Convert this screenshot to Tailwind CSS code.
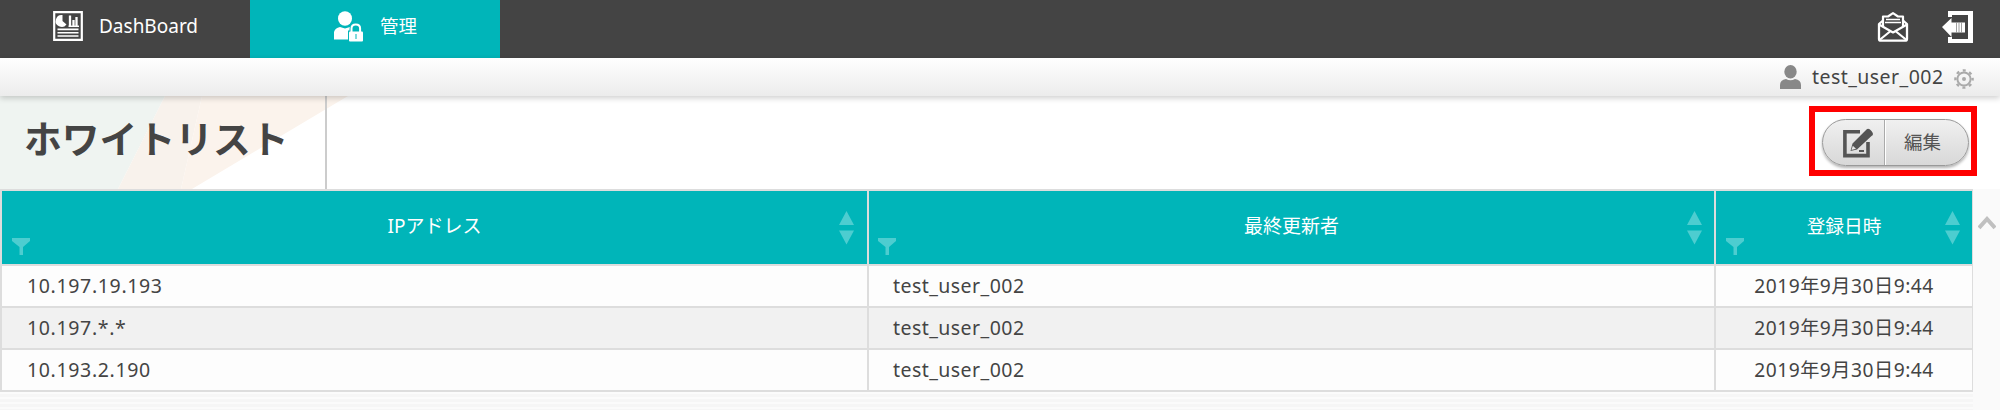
<!DOCTYPE html>
<html lang="ja">
<head>
<meta charset="utf-8">
<title>ホワイトリスト</title>
<script src="https://cdn.jsdelivr.net/npm/@tailwindcss/browser@4"></script>
</head>
<body class="w-[2000px] h-[410px] overflow-hidden bg-white text-[#444] font-['Noto_Sans','Noto_Sans_CJK_JP',sans-serif] text-[19.500px]">
<svg class="hidden">
  <symbol id="sort" viewBox="0 0 15 34"><path d="M7.5 0 15 14H0zM0 19.500h15L7.500 33.500z" fill="#4dcdd0"/></symbol>
  <symbol id="filter" viewBox="0 0 18 17"><path d="M0 0h18v3l-7 6v8H7.500V9L0 3z" fill="#4dcdd0"/></symbol>
</svg>

<nav class="flex h-[58px] bg-[#444] text-white">
  <a class="flex w-[250px] h-[52px] items-center pl-[53px] text-[19px]">
    <svg class="w-[30px] h-[30px] mr-[16px]" viewBox="0 0 30 30" fill="none">
      <path d="M1.200 1.200h27.600v27.600H1.200z" stroke="#fff" stroke-width="2.200"/>
      <path d="M9.500 4v6l4 3.500A6 6 0 1 1 9.500 4z" fill="#fff"/>
      <path d="M17 4.500V15M20.500 9v6M23.500 6v9" stroke="#fff" stroke-width="2.300"/>
      <path d="M15.500 15.300H26" stroke="#fff" stroke-width="1.500"/>
      <path d="M4.500 18.400h21M4.500 21.700h21M4.500 25h21" stroke="#fff" stroke-width="1.600"/>
    </svg>
    <span>DashBoard</span>
  </a>
  <a class="flex w-[250px] h-[58px] items-center pb-[6px] pl-[84px] bg-[#00b5b9] text-[18.500px]">
    <svg class="w-[30px] h-[31px] mr-[16px]" viewBox="0 0 30 31">
      <ellipse cx="11" cy="7.500" rx="7" ry="7.300" fill="#fff"/>
      <path d="M0 28.500V21q1-4 6-5l5 1.500 5-1.500 4 2v10.500z" fill="#fff"/>
      <path d="M14 19.500h15.500V31H14z" fill="#00b5b9"/>
      <path d="M17.500 21v-3q0-4 4.500-4t4.500 4v3" fill="#00b5b9" stroke="#00b5b9" stroke-width="4"/>
      <path d="M17.500 21.500v-4q0-4 4.300-4t4.300 4v4" fill="none" stroke="#fff" stroke-width="2"/>
      <rect x="15" y="20.500" width="14" height="10" rx="1" fill="#fff"/>
      <path d="M21 23h2v5h-2z" fill="#7fdadc"/>
    </svg>
    <span>管理</span>
  </a>
  <div class="flex flex-1 h-[54px] items-center justify-end pr-[27px] gap-[33px]">
    <svg class="w-[32px] h-[30px]" viewBox="0 0 32 30" fill="none" stroke="#fff" stroke-linejoin="round">
      <path d="M6 8.500 2 12v15q0 1.700 2 1.700h24q2 0 2-1.700V12l-4-3.500" stroke-width="2.300"/>
      <path d="M6 15V4.500h5L16 1.200l5 3.300h5V15" stroke-width="2.200"/>
      <path d="M9 7.500h14M8 10.500h16" stroke-width="1.400"/>
      <path d="m2 12.500 14 8 14-8M2.500 28 13 19.500M29.500 28 19 19.500" stroke-width="2.200"/>
    </svg>
    <svg class="w-[31px] h-[32px]" viewBox="0 0 31 32" fill="#fff">
      <path d="M6 0h25v32H6v-6h4v2h16V4H10v2H6z"/>
      <path d="M0 16 9.500 7v4.500H23v10H9.500V26z"/>
      <path d="M14.500 11.500v10M17 11.500v10M19.500 11.500v10" stroke="#888" stroke-width=".8"/>
    </svg>
  </div>
</nav>

<div class="relative z-10 flex h-[38px] items-center justify-end pr-[26px] bg-linear-to-b from-white to-[#ececec] shadow-[0_2px_6px_rgba(0,0,0,0.2)]">
  <svg class="w-[21px] h-[24px] mr-[11px]" viewBox="0 0 21 24" fill="#888"><ellipse cx="10.500" cy="6.800" rx="6.200" ry="6.800"/><path d="M0 24v-4q0-5 6-6 4.500 2.500 9 0 6 1 6 6v4z"/></svg>
  <span class="w-[131px] whitespace-nowrap tracking-[0.450px]">test_user_002</span>
  <svg class="w-[20px] h-[20px] ml-[11px] mt-[3px]" viewBox="0 0 20 20" fill="none" stroke="#aaa">
    <circle cx="10" cy="10" r="6.600" stroke-width="2"/>
    <circle cx="10" cy="10" r="8.600" stroke-width="2.400" stroke-dasharray="3 3.754" stroke-dashoffset="1.500"/>
    <circle cx="10" cy="10" r="2" fill="#aaa" stroke="none"/>
  </svg>
</div>

<header class="relative flex h-[93px] justify-between bg-white">
  <svg class="absolute left-0 top-0 w-[352px] h-[93px]" viewBox="0 0 352 93">
    <path d="M0 0h165l-47 93H0z" fill="#eff4f1"/>
    <path d="M165 0h37l-21 93h-63z" fill="#f8f2ec"/>
    <path d="M202 0h146L192 93h-11z" fill="#fbf3ec"/>
  </svg>
  <h1 class="relative w-[327px] h-full border-r-2 border-[#ccc] pl-[24px] pt-[13px] whitespace-nowrap font-['Noto_Sans_CJK_JP',sans-serif] font-bold text-[37.800px] leading-[56px]">ホワイトリスト</h1>
  <div class="relative mt-[10px] mr-[23px] w-[168px] h-[70px] border-6 border-[#f00] pt-[7px] pl-[7px]">
    <button class="flex w-[147px] h-[47px] rounded-full border-[1.500px] border-[#999] bg-linear-to-b from-[#f0f0f0] to-[#d8d8d8] shadow-[0_2px_3px_rgba(0,0,0,0.3)] overflow-hidden">
      <span class="flex w-[62px] h-full items-center pl-[20px] border-r border-[#aaa]">
        <svg class="w-[30px] h-[30px]" viewBox="0 0 30 30" fill="none">
          <path d="M17 3.800H1.900V27.600H25V14" stroke="#555" stroke-width="3.600"/>
          <path d="m7.500 23 2-7.500L23.500 1.500q2-2 5 1.500t0 5L14 21.500z" fill="#555"/>
          <path d="m8.500 22 1.300-4.200 3.200 3z" fill="#e5e5e5"/>
          <path d="M16 23h5" stroke="#555" stroke-width="1.800"/>
        </svg>
      </span>
      <span class="flex-1 h-full border-l border-white pl-[18px] text-left text-[18.500px] leading-[43px] text-[#555]">編集</span>
    </button>
  </div>
</header>

<main class="flex h-[221px] bg-[#fafafa]">
  <div class="w-[1973px]">
    <div class="grid grid-cols-[865px_845px_256px] grid-rows-[73px_40px_40px_40px] gap-[2px] bg-[#ddd] border-l-2 border-r border-y-2 border-[#ddd] h-[203px] w-[1973px]">
      <div class="relative flex items-center justify-center bg-[#00b5b9] text-white pb-[2px] text-[19px]"><span>IPアドレス</span>
        <svg class="absolute left-[10px] top-[47px] w-[18px] h-[17px]"><use href="#filter"/></svg>
        <svg class="absolute left-[837px] top-[20px] w-[15px] h-[34px]"><use href="#sort"/></svg></div>
      <div class="relative flex items-center justify-center bg-[#00b5b9] text-white pb-[2px] text-[19px]"><span>最終更新者</span>
        <svg class="absolute left-[9px] top-[47px] w-[18px] h-[17px]"><use href="#filter"/></svg>
        <svg class="absolute left-[818px] top-[20px] w-[15px] h-[34px]"><use href="#sort"/></svg></div>
      <div class="relative flex items-center justify-center bg-[#00b5b9] text-white pb-[2px] text-[18.700px]"><span>登録日時</span>
        <svg class="absolute left-[10px] top-[47px] w-[18px] h-[17px]"><use href="#filter"/></svg>
        <svg class="absolute left-[229px] top-[20px] w-[15px] h-[34px]"><use href="#sort"/></svg></div>

      <div class="bg-[#fdfdfd] pl-[25px] leading-[39px] tracking-[0.650px]">10.197.19.193</div>
      <div class="bg-[#fdfdfd] pl-[24px] leading-[39px] tracking-[0.450px]">test_user_002</div>
      <div class="bg-[#fdfdfd] text-center leading-[39px] text-[19.200px] tracking-[0.500px]">2019年9月30日9:44</div>

      <div class="bg-[#f1f1f1] pl-[25px] leading-[39px] tracking-[0.650px]">10.197.*.*</div>
      <div class="bg-[#f1f1f1] pl-[24px] leading-[39px] tracking-[0.450px]">test_user_002</div>
      <div class="bg-[#f1f1f1] text-center leading-[39px] text-[19.200px] tracking-[0.500px]">2019年9月30日9:44</div>

      <div class="bg-[#fdfdfd] pl-[25px] leading-[39px] tracking-[0.650px]">10.193.2.190</div>
      <div class="bg-[#fdfdfd] pl-[24px] leading-[39px] tracking-[0.450px]">test_user_002</div>
      <div class="bg-[#fdfdfd] text-center leading-[39px] text-[19.200px] tracking-[0.500px]">2019年9月30日9:44</div>
    </div>
    <div class="h-[18px] bg-[repeating-linear-gradient(to_bottom,#fbfbfb_0_2px,#f6f6f6_2px_5px)]"></div>
  </div>
  <svg class="w-[18px] h-[15px] ml-[5px] mt-[26px]" viewBox="0 0 18 15" fill="none"><path d="m1 13 8-9 8 9" stroke="#c0c0c0" stroke-width="4"/></svg>
</main>
</body>
</html>
